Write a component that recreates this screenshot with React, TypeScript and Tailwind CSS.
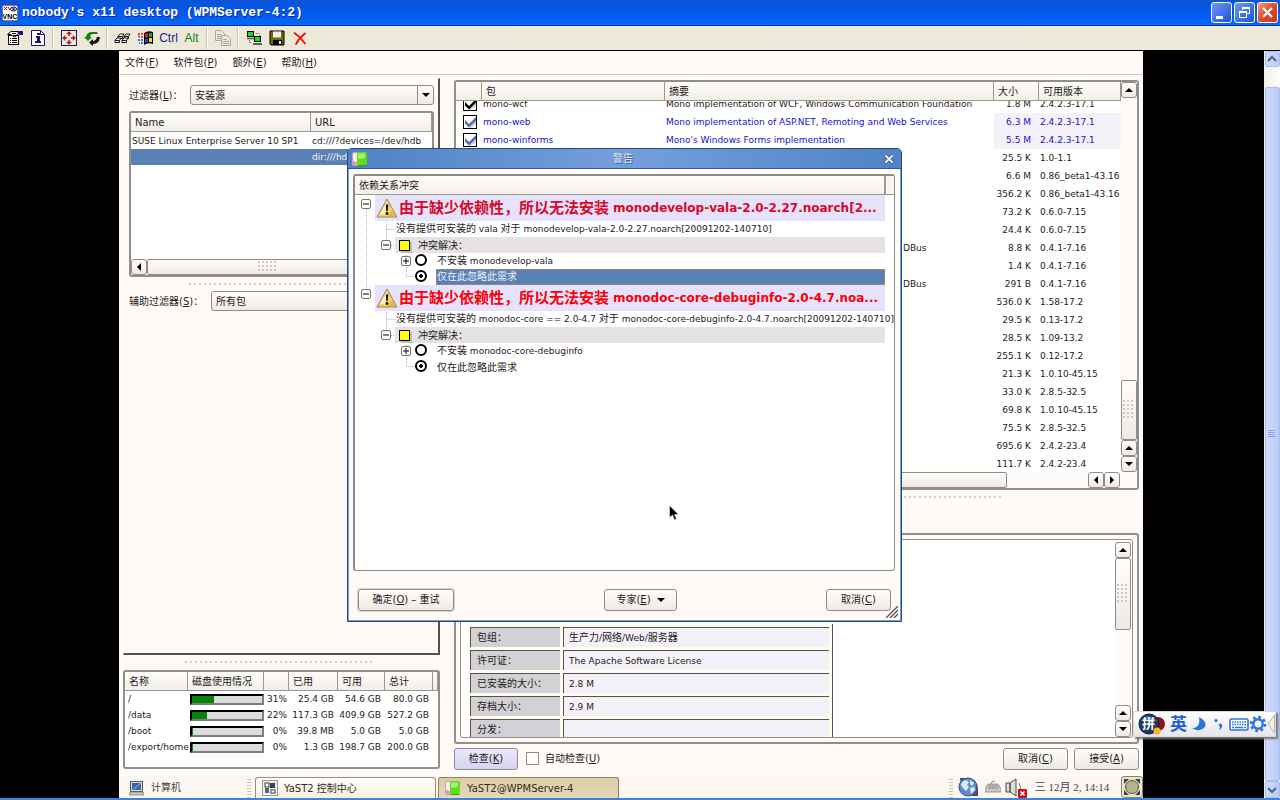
import type { ReactNode } from "react";

type Pkg = {
  name?: string;
  summary?: string;
  size: string;
  version: string;
  auto?: boolean;
  tail?: boolean;
};

const packages: Pkg[] = [
  { name: "mono-wcf", summary: "Mono implementation of WCF, Windows Communication Foundation", size: "1.8 M", version: "2.4.2.3-17.1" },
  { name: "mono-web", summary: "Mono implementation of ASP.NET, Remoting and Web Services", size: "6.3 M", version: "2.4.2.3-17.1", auto: true },
  { name: "mono-winforms", summary: "Mono's Windows Forms implementation", size: "5.5 M", version: "2.4.2.3-17.1", auto: true },
  { size: "25.5 K", version: "1.0-1.1" },
  { size: "6.6 M", version: "0.86_beta1-43.16" },
  { size: "356.2 K", version: "0.86_beta1-43.16" },
  { size: "73.2 K", version: "0.6.0-7.15" },
  { size: "24.4 K", version: "0.6.0-7.15" },
  { summary: "DBus", tail: true, size: "8.8 K", version: "0.4.1-7.16" },
  { size: "1.4 K", version: "0.4.1-7.16" },
  { summary: "DBus", tail: true, size: "291 B", version: "0.4.1-7.16" },
  { size: "536.0 K", version: "1.58-17.2" },
  { size: "29.5 K", version: "0.13-17.2" },
  { size: "28.5 K", version: "1.09-13.2" },
  { size: "255.1 K", version: "0.12-17.2" },
  { size: "21.3 K", version: "1.0.10-45.15" },
  { size: "33.0 K", version: "2.8.5-32.5" },
  { size: "69.8 K", version: "1.0.10-45.15" },
  { size: "75.5 K", version: "2.8.5-32.5" },
  { size: "695.6 K", version: "2.4.2-23.4" },
  { size: "111.7 K", version: "2.4.2-23.4" },
];

const disks = [
  { name: "/", percent: 31, used: "25.4 GB", free: "54.6 GB", total: "80.0 GB" },
  { name: "/data", percent: 22, used: "117.3 GB", free: "409.9 GB", total: "527.2 GB" },
  { name: "/boot", percent: 0, used: "39.8 MB", free: "5.0 GB", total: "5.0 GB" },
  { name: "/export/home", percent: 0, used: "1.3 GB", free: "198.7 GB", total: "200.0 GB" },
];

const details = [
  ["包组：", "生产力/网络/Web/服务器"],
  ["许可证：", "The Apache Software License"],
  ["已安装的大小：", "2.8 M"],
  ["存档大小：", "2.9 M"],
  ["分发：", ""],
];

const conflicts = [
  {
    title: "由于缺少依赖性，所以无法安装",
    pkg: "monodevelop-vala-2.0-2.27.noarch[2...",
    detail: "没有提供可安装的 vala 对于 monodevelop-vala-2.0-2.27.noarch[20091202-140710]",
    skip: "不安装 monodevelop-vala",
    color: "text-[#d8092a]",
    selected: true,
  },
  {
    title: "由于缺少依赖性，所以无法安装",
    pkg: "monodoc-core-debuginfo-2.0-4.7.noa...",
    detail: "没有提供可安装的 monodoc-core == 2.0-4.7 对于 monodoc-core-debuginfo-2.0-4.7.noarch[20091202-140710]",
    skip: "不安装 monodoc-core-debuginfo",
    color: "text-[#fb0007]",
    selected: false,
  },
];

const bevel = "border border-[#8f8c88] bg-linear-to-b from-[#fffdfa] to-[#efe9e2]";
const headCell = "h-[19px] border-r border-b border-[#9b9792] text-left font-normal leading-5";

// Latin runs are set one pixel smaller than the Chinese around them
function Mixed({ text }: { text: string }) {
  return (
    <>
      {text.split(/([ -~]+)/).map((part, i) =>
        i % 2 ? (
          <span key={i} className="whitespace-pre text-[9px]">{part}</span>
        ) : (
          part
        ),
      )}
    </>
  );
}

function Hot({ label, k, after = "" }: { label: string; k: string; after?: string }) {
  return (
    <>
      {label}(<u className="underline-offset-1">{k}</u>){after}
    </>
  );
}

function Arrow({ dir }: { dir: "up" | "down" | "left" | "right" }) {
  const d = {
    up: "M4 2 8 6H0z",
    down: "M0 2h8L4 6z",
    left: "M6 0v8L2 4z",
    right: "M2 0v8l4-4z",
  }[dir];
  return (
    <svg viewBox="0 0 8 8" className="h-2 w-2">
      <path d={d} fill="#000" />
    </svg>
  );
}

function StepButton({ dir }: { dir: "up" | "down" | "left" | "right" }) {
  return (
    <button aria-label={dir} className={`flex h-4 w-4 shrink-0 items-center justify-center rounded-[3px] ${bevel}`}>
      <Arrow dir={dir} />
    </button>
  );
}

function Grip({ cols, rows }: { cols: number; rows: number }) {
  return (
    <svg width={cols * 4} height={rows * 4} className="shrink-0">
      {Array.from({ length: cols * rows }, (_, i) => (
        <rect key={i} x={(i % cols) * 4} y={Math.floor(i / cols) * 4} width="2" height="2" fill="#cdc8c2" />
      ))}
    </svg>
  );
}

function SplitDots({ className }: { className: string }) {
  return (
    <div
      className={`h-0.5 bg-[repeating-linear-gradient(90deg,#d3cec8_0px,#d3cec8_2px,transparent_2px,transparent_5px)] ${className}`}
    />
  );
}

function DialogButton({ children, className = "" }: { children: ReactNode; className?: string }) {
  return (
    <button className={`flex h-[22px] items-center justify-center rounded-[3px] ${bevel} ${className}`}>
      {children}
    </button>
  );
}

function YastIcon() {
  return (
    <svg viewBox="0 0 16 16" className="h-4 w-4 shrink-0">
      <rect x="0.5" y="1.5" width="8" height="13" rx="1.5" fill="#f4eef2" stroke="#b9a9b3" />
      <path d="M2 10v4M4 11v3" stroke="#c2477c" strokeWidth="1" />
      <rect x="5" y="1" width="10" height="13" rx="1.5" fill="#5fdc1c" />
      <path d="M6 2.5h7v4q-3 2-7 1z" fill="#a4f268" />
      <path d="M5.5 14.5h9" stroke="#3b9a12" />
    </svg>
  );
}

/* ---------- VNC viewer window ---------- */

function TitleBar() {
  return (
    <header className="flex h-[26px] shrink-0 items-center gap-1 border-b border-[#0036b3] bg-linear-to-b from-[#0b52d6] via-[#0458ec] to-[#0468fd] pr-0.5 pl-0.5">
      <svg viewBox="0 0 16 16" className="h-4 w-4">
        <rect width="16" height="16" fill="#fff" stroke="#000" />
        <path d="M2 2l3 3M5 2 2 5M6 2l2 3" stroke="#c00" />
        <ellipse cx="11.500" cy="4" rx="3" ry="2" fill="#fff" stroke="#000" />
        <circle cx="11.500" cy="4" r="1.300" fill="#1438d8" />
        <text x="8" y="14" fontSize="7" fontWeight="700" textAnchor="middle" fontFamily="Liberation Sans">VNC</text>
      </svg>
      <h1 className="flex-1 whitespace-pre font-['Liberation_Mono',monospace] text-[13px] font-bold text-white [text-shadow:1px_1px_0_#0a2f8f]">
        nobody's x11 desktop (WPMServer-4:2)
      </h1>
      <div className="flex gap-0.5">
        <button aria-label="Minimize" className="flex h-[21px] w-[21px] rounded-[3px] border border-white bg-linear-to-br from-[#6f98f5] to-[#1f4fd8]">
          <svg viewBox="0 0 19 19"><rect x="4" y="13" width="7" height="3" fill="#fff" /></svg>
        </button>
        <button aria-label="Restore" className="flex h-[21px] w-[21px] rounded-[3px] border border-white bg-linear-to-br from-[#6f98f5] to-[#1f4fd8]">
          <svg viewBox="0 0 19 19" fill="none" stroke="#fff">
            <path d="M7.500 7V4.500h7v6H12" />
            <path d="M7 5h8" strokeWidth="2" />
            <rect x="4.500" y="8.500" width="7" height="6" />
            <path d="M4 9h8" strokeWidth="2" />
          </svg>
        </button>
        <button aria-label="Close" className="flex h-[21px] w-[21px] rounded-[3px] border border-white bg-linear-to-br from-[#f09a80] via-[#e0492a] to-[#c8371b]">
          <svg viewBox="0 0 19 19"><path d="M5 5l9 9M14 5l-9 9" stroke="#fff" strokeWidth="2.200" /></svg>
        </button>
      </div>
    </header>
  );
}

function Tool({ label, children }: { label: string; children: ReactNode }) {
  return (
    <button aria-label={label} className="flex h-5 w-[23px] items-center justify-center">
      {children}
    </button>
  );
}

function Sep() {
  return <span className="mx-[3px] h-[22px] w-0.5 border-r border-l border-r-white border-l-[#c9c5b4]" />;
}

function Toolbar() {
  const icon = "h-4 w-4";
  return (
    <nav className="flex h-[25px] shrink-0 items-center border-b border-black bg-[#ece9d8] pl-[3px] font-['Liberation_Sans',sans-serif] text-[12px]">
      <Tool label="Options">
        <svg viewBox="0 0 16 16" className={icon} fill="none" stroke="#000">
          <rect x="1.500" y="5.500" width="10" height="9" fill="#fff" />
          <path d="M3 8.500h1M5 8.500h5M3 10.500h1M5 10.500h5M3 12.500h1M5 12.500h5" />
          <path d="M.5 4.500 4 1.500h7v2L8.500 7 6 6.500 4 4.500z" fill="#fff" />
          <path d="M5 3.500h4M6 5.500h3" />
          <path d="M11 1h5v4h-4z" fill="#15157c" stroke="none" />
        </svg>
      </Tool>
      <Tool label="Info">
        <svg viewBox="0 0 16 16" className={icon}>
          <path d="M1.500.5h9l4 4v11h-13z" fill="#fff" stroke="#15157c" />
          <path d="M10.500.5v4h4" fill="none" stroke="#15157c" />
          <path d="M7 3h3v2H7zM6 6h4v5h1v2H5v-2h2V8H6z" fill="#15157c" />
        </svg>
      </Tool>
      <Sep />
      <Tool label="Full screen">
        <svg viewBox="0 0 16 16" className={icon}>
          <rect x=".5" y=".5" width="15" height="15" fill="#ece9d8" stroke="#15157c" />
          <path d="M8 1.500 5.500 4H7.500v2h1V4h2zM8 14.500 10.500 12H8.500v-2h-1v2h-2zM1.500 8 4 10.500V8.500h2v-1H4v-2zM14.500 8 12 5.500V7.500h-2v1h2v2z" fill="#a01818" stroke="#a01818" strokeWidth=".4" />
        </svg>
      </Tool>
      <Tool label="Refresh">
        <svg viewBox="0 0 16 16" className={icon}>
          <path d="M13 7h3l-1 4q-2 3-6 3v2l-4-3.500L9 9v2q3 0 4-4z" fill="#101010" />
          <path d="M8 2h5l1 2H8Q6 5 6 7h2L4 11 0 7h2q1-5 6-5z" fill="#128212" />
        </svg>
      </Tool>
      <Sep />
      <Tool label="Send keys">
        <svg viewBox="0 0 17 16" className="h-4 w-[17px]" fill="#fff" stroke="#000" strokeWidth=".9">
          <path d="M4 6.500 6 4h4L8.500 6.500v2H4z" />
          <path d="M10 6.500 12 4h4L14.500 6.500v2H10z" />
          <path d="M1 10.500 3 8h4l-1.500 2.500v2H1z" />
          <path d="M8 10.500 10 8h4l-1.500 2.500v2H8z" />
          <path d="M1 10.500h4.500M8 10.500h4.500M4 6.500h4.500M10 6.500h4.500" fill="none" />
        </svg>
      </Tool>
      <Tool label="Windows key">
        <svg viewBox="0 0 16 16" className={icon}>
          <path d="M6 3q4-3 9-1v12q-5-2-9 1z" fill="#000" />
          <path d="M7 4q1-1 3-1v4L7 8z" fill="#e01818" />
          <path d="M11 3h3v4h-3z" fill="#17a51b" />
          <path d="M7 9l3-1v4l-3 1z" fill="#1e46e0" />
          <path d="M11 8h3v4h-3z" fill="#f2e010" />
          <path d="M0 4h2M3 4h2M1 7h1M3 7h2M0 6h1" stroke="#e01818" strokeWidth="1.500" />
          <path d="M0 10h2M3 10h2M1 13h1M3 13h2" stroke="#1e46e0" strokeWidth="1.500" />
        </svg>
      </Tool>
      <Tool label="Ctrl"><span className="text-[#1a1a8c]">Ctrl</span></Tool>
      <Tool label="Alt"><span className="text-[#158015]">Alt</span></Tool>
      <Sep />
      <Tool label="Clipboard">
        <svg viewBox="0 0 16 16" className={icon} fill="#ece9d8" stroke="#aca899">
          <path d="M.5.5h6l3 3v7h-9z" />
          <path d="M2 4.500h4M2 6.500h4M2 8.500h4" />
          <path d="M6.500 5.500h6l3 3v7h-9z" />
          <path d="M8 9.500h4M8 11.500h6M8 13.500h6" />
        </svg>
      </Tool>
      <Sep />
      <Tool label="New connection">
        <svg viewBox="0 0 16 16" className={icon}>
          <rect x="1.500" y="1.500" width="6" height="5" fill="#19dd1f" stroke="#000" />
          <path d="M1 8.500h8" stroke="#555" strokeWidth="1.500" />
          <rect x="8.500" y="6.500" width="6" height="5" fill="#19dd1f" stroke="#000" />
          <path d="M7 14h9" stroke="#333" strokeWidth="1.500" />
          <path d="M10 3.500h3.500V6M3.500 10v2.500H6" fill="none" stroke="#777" strokeDasharray="1.500 1" />
        </svg>
      </Tool>
      <Tool label="Save">
        <svg viewBox="0 0 16 16" className={icon}>
          <path d="M1 1h14v14H2l-1-1z" fill="#6d6d10" stroke="#000" />
          <rect x="4" y="1.500" width="8" height="6" fill="#f0eee2" />
          <rect x="4" y="10" width="9" height="5" fill="#000" />
          <rect x="10" y="11" width="2" height="3" fill="#fff" />
        </svg>
      </Tool>
      <Tool label="Disconnect">
        <svg viewBox="0 0 16 16" className={icon}>
          <path d="M2.500 3q6 4 10.500 10.500M13 3.500Q7 8 4 14" fill="none" stroke="#f01010" strokeWidth="1.800" strokeLinecap="round" />
        </svg>
      </Tool>
    </nav>
  );
}

function ViewerScrollbar() {
  const xp = "flex w-[15px] items-center justify-center rounded-[2px] border border-[#a9bdf0] bg-linear-to-r from-[#cfdcfd] to-[#b9cbf8]";
  return (
    <div className="flex w-4 shrink-0 flex-col items-center bg-linear-to-r from-[#f0eee8] to-[#fdfdfa]">
      <button aria-label="Scroll up" className={`${xp} h-4`}>
        <svg viewBox="0 0 10 8" className="h-2 w-2.5"><path d="M1 6l4-4 4 4" fill="none" stroke="#4d6185" strokeWidth="2" /></svg>
      </button>
      <div className={`${xp} mt-5 flex-1`}>
        <svg width="8" height="8"><path d="M0 .5h7M0 2.500h7M0 4.500h7M0 6.500h7" stroke="#8ca6ec" /></svg>
      </div>
      <button aria-label="Scroll down" className={`${xp} h-[17px]`}>
        <svg viewBox="0 0 10 8" className="h-2 w-2.5"><path d="M1 2l4 4 4-4" fill="none" stroke="#4d6185" strokeWidth="2" /></svg>
      </button>
    </div>
  );
}

/* ---------- Package manager ---------- */

function MenuBar() {
  const items = [
    ["文件", "F"],
    ["软件包", "P"],
    ["额外", "E"],
    ["帮助", "H"],
  ];
  return (
    <nav className="flex h-6 shrink-0 items-center gap-[15px] border-b border-[#cbc7c2] pl-1.5">
      {items.map(([label, k]) => (
        <button key={k}>
          <Hot label={label} k={k} />
        </button>
      ))}
    </nav>
  );
}

function Combo({ id, value }: { id: string; value: string }) {
  return (
    <div className={`relative flex h-5 flex-1 rounded-[3px] ${bevel}`}>
      <select id={id} className="w-full appearance-none bg-transparent pl-1 outline-none">
        <option>{value}</option>
      </select>
      <span className="pointer-events-none absolute inset-y-0 right-0 flex w-4 items-center justify-center border-l border-[#8f8c88]">
        <Arrow dir="down" />
      </span>
    </div>
  );
}

function SourcesPane() {
  const row = "grid grid-cols-[180px_1fr]";
  return (
    <section className="flex flex-1 flex-col border-t border-l border-r-2 border-b-2 border-t-white border-r-[#55534f] border-b-[#55534f] border-l-white pt-1.5 pr-1 pl-[5px]">
      <div className="flex items-center">
        <label htmlFor="filter" className="w-[61px]">
          <Hot label="过滤器" k="L" after="：" />
        </label>
        <Combo id="filter" value="安装源" />
      </div>
      <div className="mt-1.5 flex h-[166px] flex-col rounded-[3px] border-2 border-[#8f8f8c] bg-white">
        <table className="block flex-1">
          <thead className="block">
            <tr className={row}>
              <th className={`${headCell} bg-linear-to-b from-[#fffdfa] to-[#f3eee6] pl-1`}>Name</th>
              <th className={`${headCell} bg-linear-to-b from-[#fffdfa] to-[#f3eee6] pl-1`}>URL</th>
            </tr>
          </thead>
          <tbody className="block pt-px text-[9px] leading-4 whitespace-nowrap">
            <tr className={row}>
              <td className="pl-px">SUSE Linux Enterprise Server 10 SP1</td>
              <td className="pl-px">cd:///?devices=/dev/hdb</td>
            </tr>
            <tr className={`${row} bg-[#5a81b5] text-[#f1f4fa]`}>
              <td />
              <td className="pl-px">dir:///hdb</td>
            </tr>
          </tbody>
        </table>
        <div className="flex">
          <StepButton dir="left" />
          <div className={`flex h-4 flex-1 items-center justify-center rounded-[2px] pr-7 ${bevel}`}>
            <Grip cols={5} rows={3} />
          </div>
          <StepButton dir="right" />
        </div>
      </div>
      <SplitDots className="mx-[60px] mt-1.5" />
      <div className="mt-1.5 flex items-center">
        <label htmlFor="filter2" className="w-[82px]">
          <Hot label="辅助过滤器" k="S" after="：" />
        </label>
        <Combo id="filter2" value="所有包" />
      </div>
    </section>
  );
}

function DiskUsage() {
  const row = "grid grid-cols-[63px_76px_25px_49px_47px_48px_1fr]";
  return (
    <section className="h-[99px] overflow-hidden rounded-[3px] border-2 border-[#8f8f8c] bg-white">
      <table className="block">
        <thead className="block">
          <tr className={row}>
            {["名称", "磁盘使用情况", "", "已用", "可用", "总计", ""].map((h, i) => (
              <th key={i} className={`${headCell} bg-linear-to-b from-[#fffdfa] to-[#f3eee6] pl-1`}>{h}</th>
            ))}
          </tr>
        </thead>
        <tbody className="block text-[9px] leading-4 whitespace-nowrap">
          {disks.map((d) => (
            <tr key={d.name} className={row}>
              <td className="pl-[3px]">{d.name}</td>
              <td className="flex items-center pl-0.5">
                <div className="h-[11px] w-full border-2 border-t-black border-r-[#7d7d7d] border-b-[#7d7d7d] border-l-black bg-[#dcdcdc]">
                  <div className="h-full min-w-px bg-[#078307]" style={{ width: `${d.percent}%` }} />
                </div>
              </td>
              <td className="pr-0.5 text-right">{d.percent}%</td>
              <td className="pr-1 text-right">{d.used}</td>
              <td className="pr-1 text-right">{d.free}</td>
              <td className="pr-1 text-right">{d.total}</td>
              <td />
            </tr>
          ))}
        </tbody>
      </table>
    </section>
  );
}

function PackageCheck({ name, auto }: { name: string; auto?: boolean }) {
  return (
    <span className="relative flex h-3.5 w-3.5">
      <input type="checkbox" defaultChecked aria-label={name} className="h-3.5 w-3.5 appearance-none border border-black bg-white" />
      <svg viewBox="0 0 14 14" className="pointer-events-none absolute inset-0">
        <path d="M4 9l3 3 6-7v4l-6 4z" fill="#c9c9c9" />
        <path d="M2 5l4 4 7-7v3.500l-7 7-4-4z" fill={auto ? "#4a70ad" : "#000"} />
      </svg>
    </span>
  );
}

function PackageList() {
  const row = "grid grid-cols-[26px_183px_1fr_45px_82px]";
  return (
    <section className="flex min-h-0 flex-1 flex-col overflow-hidden rounded-[3px] border-2 border-[#8f8f8c] bg-white">
      <div className="flex min-h-0 flex-1">
        <table className="flex min-h-0 flex-1 flex-col overflow-hidden">
          <thead className="relative z-10 block">
            <tr className={row}>
              {["", "包", "摘要", "大小", "可用版本"].map((h, i) => (
                <th key={i} className={`${headCell} bg-linear-to-b from-[#fffdfa] to-[#f3eee6] pl-1`}>{h}</th>
              ))}
            </tr>
          </thead>
          <tbody className="-mt-1.5 block text-[9px] leading-[18px] whitespace-nowrap">
            {packages.map((p, i) => (
              <tr key={i} className={`${row} ${p.auto ? "text-[#1414c8]" : ""}`}>
                <td className="flex h-[18px] items-center justify-end pr-[5px]">
                  {p.name && <PackageCheck name={p.name} auto={p.auto} />}
                </td>
                <td className="pl-px">{p.name}</td>
                <td className={p.tail ? "pl-[238px]" : "pl-px"}>{p.summary}</td>
                <td className={`pr-2 text-right ${p.auto ? "bg-[#f4f1f9]" : ""}`}>{p.size}</td>
                <td className={`pl-px ${p.auto ? "bg-[#f4f1f9]" : ""}`}>{p.version}</td>
              </tr>
            ))}
          </tbody>
        </table>
        <div className="flex w-4 flex-col bg-[#fdfaf7]">
          <StepButton dir="up" />
          <div className="flex-1" />
          <div className={`flex h-[60px] items-center justify-center rounded-[2px] ${bevel}`}>
            <Grip cols={3} rows={5} />
          </div>
          <StepButton dir="up" />
          <StepButton dir="down" />
        </div>
      </div>
      <div className="flex h-4 bg-[#fdfaf7] pr-[17px]">
        <StepButton dir="left" />
        <div className={`flex-1 rounded-[2px] ${bevel}`} />
        <div className="w-[81px]" />
        <StepButton dir="left" />
        <StepButton dir="right" />
      </div>
    </section>
  );
}

function PackageDetails() {
  return (
    <section className="flex h-[211px] rounded-[3px] border-2 border-[#8f8f8c] p-1">
      <div className="flex min-w-0 flex-1 overflow-hidden rounded-[3px] border border-[#8f8f8c] bg-white pt-0.5">
        <div className="flex flex-1 flex-col justify-end overflow-hidden pl-1.5">
          <table className="-mb-[5px] w-[366px] border-separate border-spacing-x-[3px] border-spacing-y-[3px] border-r border-[#55534f] bg-[#fffdf0]">
            <tbody>
              {details.map(([label, value]) => (
                <tr key={label} className="h-5">
                  <th className="w-[90px] border-t border-l border-[#55534f] bg-[#d3d1d6] pl-1.5 text-left font-normal">
                    {label}
                  </th>
                  <td className="border-t border-l border-[#55534f] bg-[#f5f1f8] pl-[5px]">
                    <Mixed text={value} />
                  </td>
                </tr>
              ))}
            </tbody>
          </table>
        </div>
        <div className="mr-px flex w-4 flex-col bg-[#fdfaf7]">
          <StepButton dir="up" />
          <div className={`flex h-[72px] items-center justify-center rounded-[2px] ${bevel}`}>
            <Grip cols={3} rows={5} />
          </div>
          <div className="flex-1" />
          <StepButton dir="up" />
          <StepButton dir="down" />
        </div>
      </div>
    </section>
  );
}

function Taskbar() {
  return (
    <footer className="flex h-[23px] shrink-0 items-end border-t border-white bg-[#fdf7f1] pl-2.5 whitespace-nowrap">
      <button className="flex h-[21px] w-[118px] items-center gap-1.5 text-[#45433f]">
        <svg viewBox="0 0 16 16" className="h-4 w-4">
          <rect x="1.500" y="1.500" width="12" height="10" fill="#dcdcda" stroke="#55585e" />
          <rect x="3" y="3" width="9" height="7" fill="#3b62a8" />
          <path d="M3 9 11 3h1v1L5 10z" fill="#6a90cc" />
          <path d="M1 12h13l1 3H0z" fill="#c9c8c4" stroke="#77746f" strokeWidth=".7" />
        </svg>
        计算机
      </button>
      <div className="mr-1 h-[19px] w-1 bg-[repeating-linear-gradient(180deg,#cfc6a8_0px,#cfc6a8_1px,transparent_1px,transparent_3px)]" />
      <button className="flex h-[21px] w-[181px] items-center gap-1.5 rounded-t-[3px] border border-b-0 border-[#9a917c] bg-linear-to-b from-[#fffefa] to-[#f8f0dc] pl-1.5 text-[#2e2c29]">
        <svg viewBox="0 0 16 16" className="h-4 w-4">
          <rect x=".5" y=".5" width="15" height="15" fill="#eceef2" stroke="#989a9e" />
          <rect x="3" y="3" width="4" height="4" fill="#fff" stroke="#3a3d44" />
          <rect x="8" y="3" width="5" height="5" fill="#3a4150" />
          <rect x="3" y="8" width="4" height="5" fill="#59606f" />
          <rect x="9" y="10" width="4" height="3" fill="#fff" stroke="#3a3d44" />
        </svg>
        YaST2 控制中心
      </button>
      <button className="ml-0.5 flex h-[21px] w-[181px] items-center gap-1.5 rounded-t-[3px] border border-b-0 border-[#8f8264] bg-linear-to-b from-[#dccba5] to-[#e7d9b6] pl-1.5 text-[#2e2c29]">
        <YastIcon />
        YaST2@WPMServer-4
      </button>
      <div className="flex-1" />
      <div className="mr-1 h-[19px] w-1 bg-[repeating-linear-gradient(180deg,#cfc6a8_0px,#cfc6a8_1px,transparent_1px,transparent_3px)]" />
      <svg viewBox="0 0 22 22" className="h-[22px] w-[22px]">
        <path d="M3 2h7L4 9zM14 20l7-8v8z" fill="#2b4d8c" />
        <path d="M16 5q6 6 1 13" fill="none" stroke="#c9262b" strokeWidth="3" />
        <circle cx="11" cy="11" r="9" fill="#5d8cc6" stroke="#2f5388" />
        <path d="M5 6l4-2 3 2-2 3 2 2-3 4-3-3-2-3zM13 4l4 3-2 3-2-2zM13 12l4-1 1 3-4 4z" fill="#dfeaf4" />
      </svg>
      <svg viewBox="0 0 16 14" className="mb-1 ml-1.5 h-3.5 w-4">
        <path d="M3 4h10l3 5v3H0V9z" fill="#c8c7c3" stroke="#8e8c88" strokeWidth=".8" />
        <path d="M3 6h10M2.500 8h11M5 4v5M8 4v5M11 4v5" stroke="#8e8c88" strokeWidth=".7" />
        <path d="M6 4q0-3 4-3" fill="none" stroke="#8e8c88" />
      </svg>
      <svg viewBox="0 0 22 20" className="ml-1 h-5 w-[22px]">
        <path d="M1 5h4v9H1zM5 5l6-4v17l-6-4z" fill="#dddcd8" stroke="#4e4c49" />
        <path d="M14 5q3 4 0 9" fill="none" stroke="#77746f" />
        <rect x="13" y="11" width="9" height="9" rx="1" fill="#c3121b" />
        <path d="M15.500 13.500l4 4M19.500 13.500l-4 4" stroke="#fff" strokeWidth="1.500" />
      </svg>
      <span className="w-[90px] self-center text-center font-['Liberation_Serif','Noto_Sans_CJK_SC',serif] text-[11px] text-[#45433f]">
        三 12月 2, 14:14
      </span>
      <button aria-label="Show desktop" className="ml-1 flex h-[22px] w-[22px] items-center justify-center rounded-[3px] border border-[#8f8264] bg-[#eee4ca]">
        <svg viewBox="0 0 18 18" className="h-4.5 w-4.5">
          <path d="M1 1h5L1 6zM17 1v5l-5-5zM1 17v-5l5 5zM17 17h-5l5-5z" fill="#31415e" />
          <circle cx="9" cy="9" r="6.500" fill="#b5b58a" stroke="#4c5148" />
        </svg>
      </button>
    </footer>
  );
}

/* ---------- Conflict dialog ---------- */

function Expander({ open }: { open?: boolean }) {
  return (
    <button aria-label={open ? "Collapse" : "Expand"} className="relative flex h-[10px] w-[10px] shrink-0 rounded-[2px] border border-[#76746f] bg-white">
      <svg viewBox="0 0 8 8" className="h-2 w-2">
        <path d={open ? "M1 4h6" : "M1 4h6M4 1v6"} stroke="#000" />
      </svg>
    </button>
  );
}

function WarnIcon() {
  return (
    <svg viewBox="0 0 22 20" className="h-5 w-[22px] shrink-0">
      <path d="M11 1 21 19H1z" fill="#f7d565" stroke="#8f8468" strokeLinejoin="round" />
      <path d="M11 3 4 16h5z" fill="#fff3bd" />
      <path d="M16 12l4 6h-9z" fill="#e6b93c" />
      <path d="M9.700 6.500h2.600L11.700 13h-1.400z" fill="#111" />
      <circle cx="11" cy="15.500" r="1.400" fill="#111" />
    </svg>
  );
}

const radioClass =
  "mb-0.5 h-3 w-3 shrink-0 appearance-none rounded-full border-2 border-black bg-white checked:bg-[radial-gradient(circle,#000_0px,#000_2px,#fff_2px)]";

function Conflict({ index }: { index: number }) {
  const c = conflicts[index];
  return (
    <li>
      <div className="flex h-[26px] pl-1.5">
        <div className="mt-1 mr-1"><Expander open /></div>
        <div className={`flex flex-1 items-center bg-[#e7e2fb] pl-px font-bold whitespace-nowrap ${c.color}`}>
          <WarnIcon />
          <span className="ml-px text-[15px]">{c.title}</span>
          <span className="ml-1 text-[12px]">{c.pkg}</span>
        </div>
      </div>
      <p className="h-4 pl-[41px] leading-4 whitespace-nowrap"><Mixed text={c.detail} /></p>
      <div className="flex h-4 items-center pl-[26px]">
        <Expander open />
        <div className="ml-1 flex h-full flex-1 items-center gap-2 bg-[#e5e1e5] pl-1">
          <span className="h-[11px] w-[11px] border border-black bg-[#ffff00] shadow-[2px_2px_0_#bdb9bd]" />
          冲突解决：
        </div>
      </div>
      <div className="flex h-4 items-center pl-[46px]">
        <Expander />
        <label className="ml-1 flex items-center gap-2.5">
          <input type="radio" name={`fix${index}`} className={radioClass} />
          <span><Mixed text={c.skip} /></span>
        </label>
      </div>
      <label className="flex h-4 items-center pl-[60px]">
        <input type="radio" name={`fix${index}`} defaultChecked className={radioClass} />
        <span
          className={
            c.selected
              ? "ml-[9px] flex-1 border border-dotted border-[#c98a4a] bg-[#5a81b5] leading-[14px] text-[#eef2f8]"
              : "ml-2.5 flex-1"
          }
        >
          仅在此忽略此需求
        </span>
      </label>
    </li>
  );
}

function ConflictDialog() {
  return (
    <div role="dialog" aria-label="警告" className="absolute top-[97px] left-[228px] flex h-[474px] w-[555px] flex-col rounded-t-[5px] border border-[#2b4976] bg-[#6c9fdc]">
      <div className="flex h-5 shrink-0 items-center rounded-t-[4px] border-b border-[#36588c] bg-linear-to-r from-[#4f81c2] via-[#759fdc] to-[#4f83c5] px-1 pr-[7px] text-[#dfe9f7]">
        <YastIcon />
        <h2 className="flex-1 pr-1.5 text-center [text-shadow:1px_1px_0_#3c5f92]">警告</h2>
        <button aria-label="关闭">
          <svg viewBox="0 0 10 10" className="h-2.5 w-2.5">
            <path d="M1.500 1.500l7 7M8.500 1.500l-7 7" stroke="#2f5288" strokeWidth="3.500" />
            <path d="M1.500 1.500l7 7M8.500 1.500l-7 7" stroke="#f2f6fc" strokeWidth="2" />
          </svg>
        </button>
      </div>
      <div className="relative mx-px mb-px flex flex-1 flex-col bg-[#fffaf5] pt-[5px] pr-[5px] pl-1">
        <div className="flex h-[397px] flex-col rounded-[3px] border-2 border-r border-b border-[#8f8c88] bg-white">
          <div className="flex">
            <h3 className={`${headCell} flex-1 border-r-2 bg-linear-to-b from-[#fffdfa] to-[#f6efe6] pl-1`}>依赖关系冲突</h3>
            <div className="h-[19px] w-2 border-b border-[#9b9792] bg-[#faf5ee]" />
          </div>
          <div className="relative pr-[9px]">
            <svg className="pointer-events-none absolute inset-0 h-full w-full" stroke="#b5b2ae" strokeDasharray="1 1" fill="none">
              <path d="M11.500 14v80M31.500 27v20M31.500 34.500h10M51.500 60v21M51.500 81.500h9M36 50.500h5M31.500 117v20M31.500 124.500h10M51.500 150v21M51.500 171.500h9M36 140.500h5" />
            </svg>
            <ul className="relative">
              <Conflict index={0} />
              <Conflict index={1} />
            </ul>
          </div>
        </div>
        <div className="flex flex-1 items-center pt-2 pr-1 pl-[5px]">
          <DialogButton className="w-24 shadow-[0_0_0_1px_#d9d4cc]">
            <Hot label="确定" k="O" after=" – 重试" />
          </DialogButton>
          <div className="flex-1" />
          <DialogButton className="mr-[149px] w-[73px] gap-1.5">
            <span><Hot label="专家" k="E" /></span>
            <Arrow dir="down" />
          </DialogButton>
          <DialogButton className="w-[65px]">
            <Hot label="取消" k="C" />
          </DialogButton>
        </div>
        <svg viewBox="0 0 12 12" className="absolute right-0.5 bottom-0.5 h-3 w-3">
          <path d="M0 12 12 0M4 12l8-8M8 12l4-4" stroke="#55534f" strokeWidth="1.300" />
        </svg>
      </div>
    </div>
  );
}

function ImeBar() {
  return (
    <div className="absolute right-1 bottom-[63px] flex h-[26px] items-center gap-1 border border-[#dadada] bg-linear-to-b from-white to-[#e6e6ea] pl-1 text-[#1c62cf] shadow-[2px_2px_2px_#777]">
      <span className="relative flex h-6 w-7">
        <svg viewBox="0 0 28 24" className="absolute inset-0">
          <circle cx="20" cy="12" r="7" fill="#8e1219" />
          <circle cx="11" cy="12" r="10" fill="#1c3a5e" stroke="#0c1b30" />
          <path d="M3 9q8-9 16 0-8-3-16 0z" fill="#5e8cba" />
          <circle cx="19" cy="19" r="3.500" fill="#f7b715" />
        </svg>
        <span className="relative pl-1 text-[13px] leading-6 font-bold text-white">拼</span>
      </span>
      <button className="text-[17px] leading-5 font-bold">英</button>
      <button aria-label="Half width">
        <svg viewBox="0 0 16 16" className="h-4 w-4"><path d="M8 1q8 4 6 10-5 6-13 1 9 0 7-11z" fill="#2a74dc" /></svg>
      </button>
      <button aria-label="Punctuation">
        <svg viewBox="0 0 14 16" className="h-4 w-3.5">
          <circle cx="5" cy="4.500" r="1.600" fill="#2a74dc" />
          <path d="M8 8q4-1 3 3-1 3-3 3 1-2 1-3-2-1-1-3z" fill="#2a74dc" />
        </svg>
      </button>
      <button aria-label="Soft keyboard" className="-mr-1">
        <svg viewBox="0 0 20 13" className="h-[13px] w-5">
          <rect x="1" y="1" width="18" height="11" rx="1.500" fill="#fff" stroke="#2a74dc" strokeWidth="1.600" />
          <path d="M3 4h14M3 6.500h14" stroke="#2a74dc" strokeWidth="1.500" strokeDasharray="1.500 1" />
          <path d="M3 9.500h2M6 9.500h8M15 9.500h2" stroke="#2a74dc" strokeWidth="1.500" />
        </svg>
      </button>
      <button aria-label="Settings" className="-mr-1">
        <svg viewBox="0 0 18 18" className="h-[18px] w-[18px]">
          <circle cx="9" cy="9" r="7" fill="none" stroke="#2a74dc" strokeWidth="2.500" strokeDasharray="2.750 2.750" />
          <circle cx="9" cy="9" r="4.800" fill="none" stroke="#2a74dc" strokeWidth="2.400" />
        </svg>
      </button>
      <svg viewBox="0 0 8 18" className="h-[18px] w-2"><path d="M7.500 0v18L1 9z" fill="#f0f0f0" stroke="#b5b5b5" /></svg>
    </div>
  );
}

export default function App() {
  return (
    <div className="relative flex h-screen flex-col overflow-hidden bg-black font-['DejaVu_Sans','Noto_Sans_CJK_SC',sans-serif] text-[10px] text-[#1c1b1a]">
      <TitleBar />
      <Toolbar />
      <div className="flex min-h-0 flex-1 border-b-2 border-[#3f83dd]">
        <main className="relative mr-[121px] ml-[119px] flex min-w-0 flex-1 flex-col bg-[#fffaf5]">
          <MenuBar />
          <div className="flex min-h-0 flex-1 px-1">
            <div className="flex w-[317px] shrink-0 flex-col pt-[3px] pb-1.5">
              <SourcesPane />
              <SplitDots className="mt-1.5 mr-[67px] mb-[7px] ml-[62px]" />
              <DiskUsage />
            </div>
            <div className="w-3.5 shrink-0" />
            <div className="flex min-w-0 flex-1 flex-col pt-[5px]">
              <PackageList />
              <SplitDots className="mt-1.5 mr-[136px] mb-[35px] ml-[240px]" />
              <PackageDetails />
              <div className="flex h-[31px] shrink-0 items-center pb-0.5">
                <button className="h-[22px] w-16 rounded-[3px] border border-[#8c8aa6] bg-linear-to-b from-[#e9e8fb] to-[#d6d4f0]">
                  <Hot label="检查" k="K" />
                </button>
                <input id="auto" type="checkbox" className="mr-1.5 ml-2 h-[13px] w-[13px] appearance-none border border-[#8f8c88] bg-white" />
                <label htmlFor="auto"><Hot label="自动检查" k="U" /></label>
                <div className="flex-1" />
                <DialogButton className="mr-1.5 w-[65px]"><Hot label="取消" k="C" /></DialogButton>
                <DialogButton className="w-[65px]"><Hot label="接受" k="A" /></DialogButton>
              </div>
            </div>
          </div>
          <Taskbar />
          <ConflictDialog />
          <svg viewBox="0 0 10 16" className="absolute top-[454px] left-[550px] h-4 w-2.5">
            <path d="M.5.5v12l3-2.500 2 5 2-1-2-4.500h4z" fill="#000" stroke="#fff" strokeWidth=".5" />
          </svg>
        </main>
        <ViewerScrollbar />
      </div>
      <ImeBar />
    </div>
  );
}
